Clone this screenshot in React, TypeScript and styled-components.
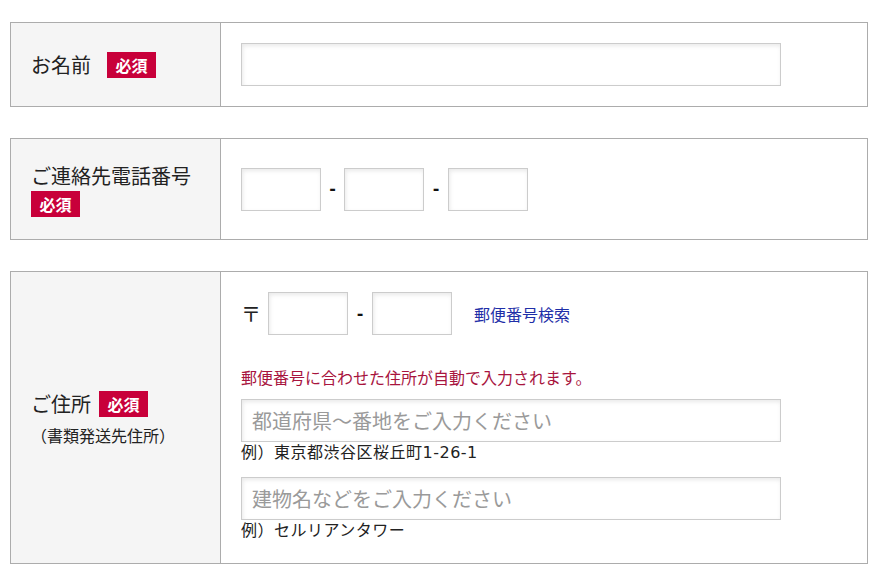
import React from "react";
import styled, { createGlobalStyle } from "styled-components";

const GlobalStyle = createGlobalStyle`
  html, body {
    margin: 0;
    padding: 0;
    background: #ffffff;
  }
  body {
    font-family: "Noto Sans CJK JP", "Noto Sans", sans-serif;
    color: #222222;
  }
  * { box-sizing: border-box; }
`;

const Page = styled.form`
  display: flex;
  flex-direction: column;
  gap: 31px;
  padding: 22px 11px 0 10px;
`;

const Box = styled.section`
  display: grid;
  grid-template-columns: 210px 1fr;
  border: 1px solid #acacac;
`;

const LabelCell = styled.div`
  display: flex;
  flex-direction: column;
  justify-content: center;
  padding: 22px 20px;
  background: #f5f5f5;
  border-right: 1px solid #acacac;
`;

const LabelRow = styled.div<{ $gap: number }>`
  display: flex;
  align-items: center;
  gap: ${(p) => p.$gap}px;
  height: 30px;
`;

const LabelText = styled.span`
  font-size: 20px;
  line-height: 30px;
  white-space: nowrap;
`;

const Required = styled.span`
  display: inline-flex;
  align-items: center;
  justify-content: center;
  width: 49px;
  height: 26px;
  background: #c8003a;
  color: #ffffff;
  font-size: 16px;
  font-weight: 700;
  line-height: 1;
  flex: none;
`;

const RequiredBlock = styled(Required)`
  display: flex;
`;

const SubLabel = styled.div`
  margin-top: 4px;
  font-size: 16px;
  line-height: 24px;
  white-space: nowrap;
`;

const ValueCell = styled.div`
  display: flex;
  flex-direction: column;
  justify-content: center;
  padding: 20px;
  background: #ffffff;
`;

const AddressCell = styled(ValueCell)`
  justify-content: flex-start;
  padding-bottom: 21px;
`;

const TextInput = styled.input<{ $w: number }>`
  display: block;
  width: ${(p) => p.$w}px;
  height: 43px;
  margin: 0;
  padding: 0 10px;
  border: 1px solid #cccccc;
  border-radius: 0;
  background: #ffffff;
  box-shadow: inset 1px 2px 4px rgba(0, 0, 0, 0.09);
  font-family: "Noto Sans CJK JP", "Noto Sans", sans-serif;
  font-size: 20px;
  color: #222222;
  outline: none;
  &::placeholder {
    color: #9a9a9a;
  }
`;

const InlineRow = styled.div`
  display: flex;
  align-items: center;
`;

const Dash = styled.span<{ $w: number }>`
  width: ${(p) => p.$w}px;
  text-align: center;
  font-family: "DejaVu Sans", "Noto Sans CJK JP", sans-serif;
  font-size: 16px;
  font-weight: 700;
  line-height: 1;
  color: #111111;
`;

const PostMark = styled.span`
  width: 20px;
  margin-right: 7px;
  font-size: 20px;
  line-height: 1;
`;

const SearchLink = styled.a`
  margin-left: 22px;
  font-size: 16px;
  line-height: 24px;
  color: #1f2fa8;
  text-decoration: none;
`;

const Note = styled.p`
  margin: 30px 0 10px;
  font-size: 16px;
  line-height: 24px;
  color: #a8143e;
  white-space: nowrap;
`;

const Example = styled.p<{ $after?: number }>`
  margin: 0 0 ${(p) => p.$after ?? 0}px;
  font-family: "DejaVu Sans", "Noto Sans CJK JP", sans-serif;
  font-size: 16px;
  line-height: 22px;
  letter-spacing: 0.5px;
  white-space: nowrap;
`;

export default function App() {
  return (
    <>
      <GlobalStyle />
      <Page onSubmit={(e) => e.preventDefault()}>
        <Box>
          <LabelCell>
            <LabelRow $gap={16}>
              <LabelText>お名前</LabelText>
              <Required>必須</Required>
            </LabelRow>
          </LabelCell>
          <ValueCell>
            <TextInput $w={540} type="text" aria-label="お名前" />
          </ValueCell>
        </Box>

        <Box>
          <LabelCell>
            <LabelText>ご連絡先電話番号</LabelText>
            <RequiredBlock>必須</RequiredBlock>
          </LabelCell>
          <ValueCell>
            <InlineRow>
              <TextInput $w={80} type="tel" aria-label="電話番号1" />
              <Dash $w={23}>-</Dash>
              <TextInput $w={80} type="tel" aria-label="電話番号2" />
              <Dash $w={24}>-</Dash>
              <TextInput $w={80} type="tel" aria-label="電話番号3" />
            </InlineRow>
          </ValueCell>
        </Box>

        <Box>
          <LabelCell>
            <LabelRow $gap={8}>
              <LabelText>ご住所</LabelText>
              <Required>必須</Required>
            </LabelRow>
            <SubLabel>（書類発送先住所）</SubLabel>
          </LabelCell>
          <AddressCell>
            <InlineRow>
              <PostMark>〒</PostMark>
              <TextInput $w={80} type="text" aria-label="郵便番号1" />
              <Dash $w={24}>-</Dash>
              <TextInput $w={80} type="text" aria-label="郵便番号2" />
              <SearchLink href="#">郵便番号検索</SearchLink>
            </InlineRow>
            <Note>郵便番号に合わせた住所が自動で入力されます。</Note>
            <TextInput $w={540} type="text" placeholder="都道府県～番地をご入力ください" />
            <Example $after={13}>例）東京都渋谷区桜丘町1-26-1</Example>
            <TextInput $w={540} type="text" placeholder="建物名などをご入力ください" />
            <Example>例）セルリアンタワー</Example>
          </AddressCell>
        </Box>
      </Page>
    </>
  );
}
